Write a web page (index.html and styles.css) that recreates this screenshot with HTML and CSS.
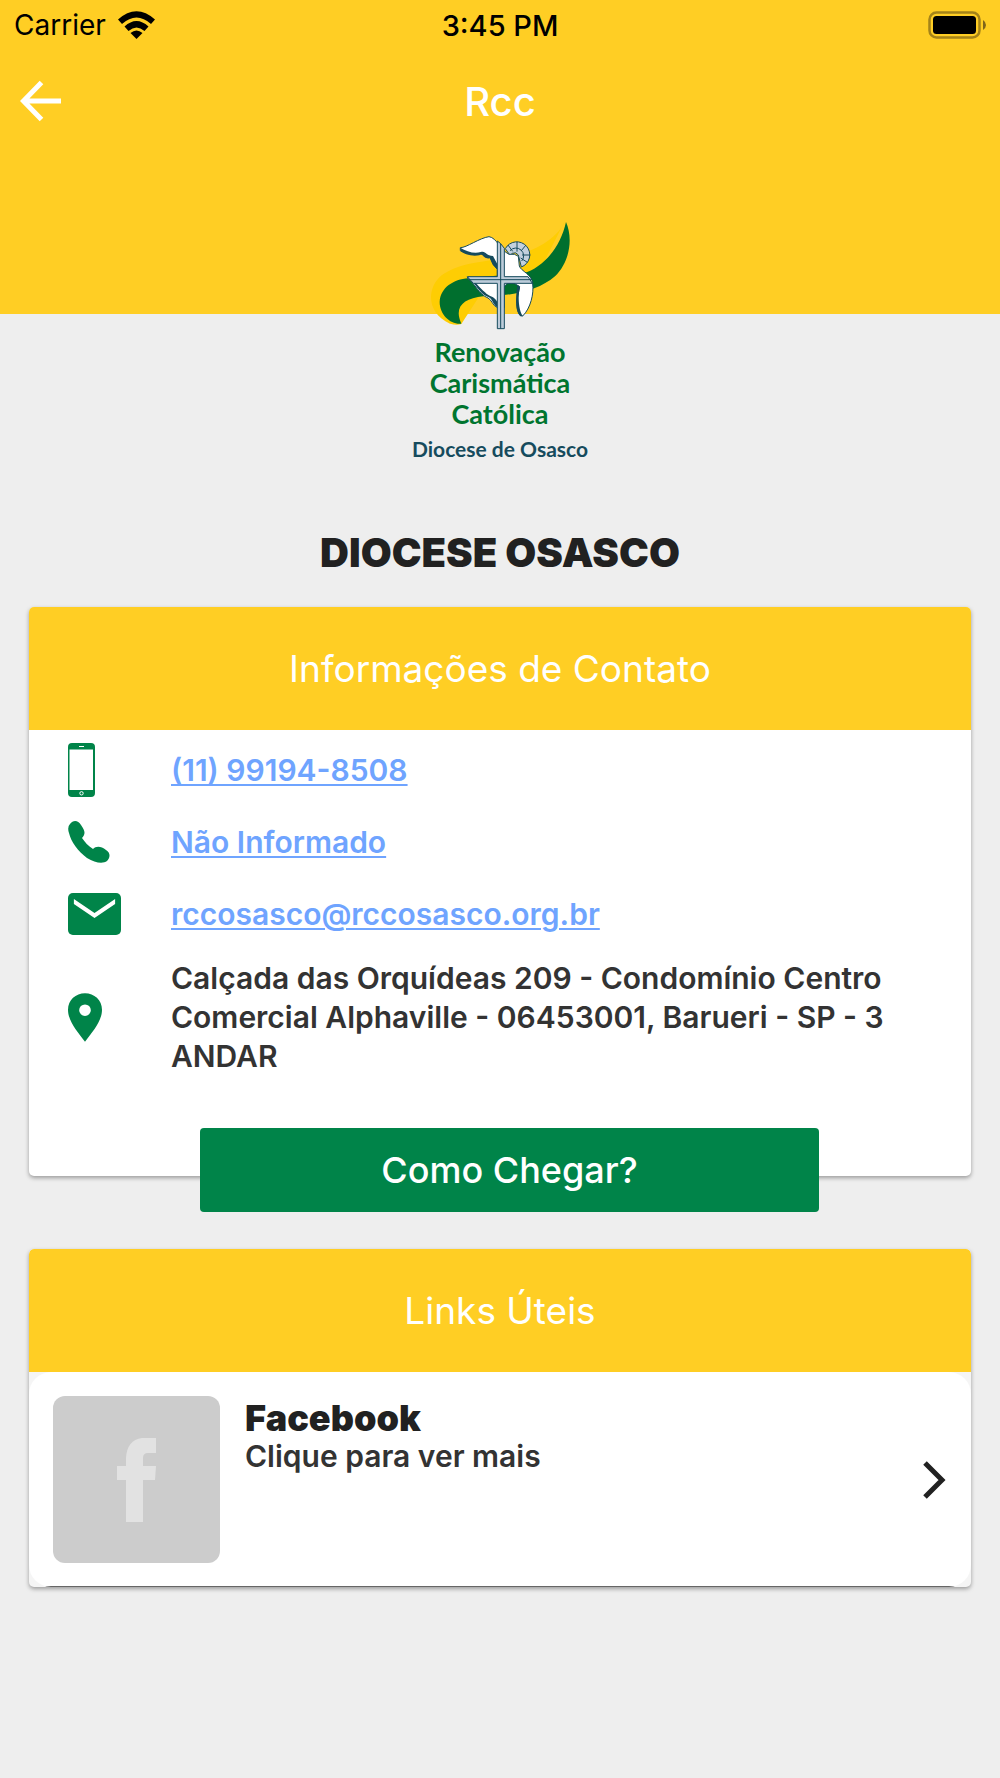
FILE: index.html
```html
<!DOCTYPE html>
<html lang="pt-BR">
<head>
<meta charset="utf-8">
<meta name="viewport" content="width=device-width, initial-scale=1">
<title>Rcc</title>
<link rel="stylesheet" href="styles.css">
</head>
<body>
<header class="top">
  <div class="status">
    <div class="carrier">
      <span>Carrier</span>
      <svg width="37" height="28" viewBox="0 0 37 28" aria-hidden="true">
        <path d="M0 8.500Q18.500-8 37 8.500L33 13Q18.500 0 4 13Z"/>
        <path d="M6.500 15.500Q18.500 4.500 30.500 15.500L26.500 20Q18.500 13 10.500 20Z"/>
        <path d="M12.500 22Q18.500 17 24.500 22L18.500 28Z"/>
      </svg>
    </div>
    <span class="time">3:45 PM</span>
    <svg class="battery" width="58" height="28" viewBox="0 0 58 28" aria-hidden="true">
      <rect x="1.500" y="1.500" width="50" height="25" rx="7" fill="none" stroke="#a48319" stroke-width="2.500"/>
      <rect x="5" y="5" width="43" height="18" rx="3.500"/>
      <path d="M55 9Q58 11 58 14T55 19Z" fill="#80651a"/>
    </svg>
  </div>
  <nav class="nav">
    <button class="back" type="button" aria-label="Voltar">
      <svg width="42" height="42" viewBox="0 0 42 42" fill="none" stroke="#fff" stroke-width="5" aria-hidden="true"><path d="M21.500 2.500 3.500 21l18 18.500M4 21h37"/></svg>
    </button>
    <h1 class="nav-title">Rcc</h1>
  </nav>
</header>
<main class="content">
  <div class="brand">
    <svg class="brand-art" width="200" height="130" viewBox="0 0 600 390" aria-hidden="true">
      <path d="M496 30C475 85 410 120 330 143C230 157 175 160 125 196C78 235 80 310 150 341Q170 347 184 342L250 240 420 180Z" fill="#fecd03"/>
      <path d="M498 36C519 83 511 154 465 199C414 242 345 257 250 259C190 265 161 291 184 341C152 345 118 313 119 275C122 233 160 208 205 205L370 190C430 173 482 111 498 36Z" fill="#006f2e"/>
      <g stroke="#164b5d" stroke-width="3" fill="#c3d0dd">
        <path d="M316 116A39 39 0 1 1 364 171L355 135A14 14 0 0 0 337 130L330 136Z"/>
        <path d="M330 122A23 23 0 1 1 365 153M351 95V125M324 105 338 124M378 105 363 123M366 135H391M362 144 382 157" fill="none"/>
      </g>
      <path d="M181 113C200 113 238 84 267 80C290 83 301 120 327 133Q346 130 355 139L358 168C363 184 397 193 398 222C402 250 392 295 368 318C352 318 347 286 353 260L359 230Q329 207 313 229V293H292C277 286 276 270 264 264C236 253 227 222 201 203L292 201V178C281 167 274 153 270 142C244 146 253 126 235 133C215 135 197 130 181 122Z" fill="#fff" stroke="#164b5d" stroke-width="3"/>
      <path d="M181 113 182 124C205 140 228 137 238 136C252 129 250 149 270 145L278 164 293 179V164L279 138C255 137 259 121 242 126C222 132 199 124 181 113ZM201 203C230 219 237 251 263 260C278 265 276 280 292 292V276C283 258 266 260 255 247C238 233 226 211 201 203ZM353 224C346 258 345 304 361 319H369C357 304 352 262 360 232Z" fill="#164b5d"/>
      <path d="M292 93 302 101 313 115V200H384L397 220H313V356H292V220H220L202 200H292Z" fill="#bdccda" stroke="#164b5d" stroke-width="3"/>
      <path d="M302 101V356M207 209H393" fill="none" stroke="#164b5d" stroke-width="3"/>
    </svg>
    <p class="brand-name">Renovação<br>Carismática<br>Católica</p>
    <p class="brand-place">Diocese de Osasco</p>
  </div>
  <h2 class="title">DIOCESE OSASCO</h2>

  <section class="card contact">
    <h3 class="card-head">Informações de Contato</h3>
    <ul class="rows">
      <li class="row">
        <svg width="27" height="54" viewBox="0 0 27 54" aria-hidden="true"><path fill="#008449" fill-rule="evenodd" d="M4 0H23Q27 0 27 4V50Q27 54 23 54H4Q0 54 0 50V4Q0 0 4 0ZM1.500 6.500V47H25V6.500ZM11 3V4H16V3Z"/><circle cx="13.500" cy="50.300" r="1.700" fill="none" stroke="#fff"/></svg>
        <a href="tel:+5511991948508">(11) 99194-8508</a>
      </li>
      <li class="row">
        <svg width="42" height="42" viewBox="0 0 42 42" aria-hidden="true"><path fill="#008449" d="M2 3C5-1 10-1 13 4C18 11 17 13 14 17C17 21 20 25 25 28C28 25 33 25 38 29C43 32 42 37 39 40C35 43 27 42 19 37C10 30 3 21 1 12Q-1 6 2 3Z"/></svg>
        <a href="#telefone">Não Informado</a>
      </li>
      <li class="row">
        <svg width="53" height="42" viewBox="0 0 54 42" preserveAspectRatio="none" aria-hidden="true"><rect width="54" height="42" rx="5" fill="#008449"/><path d="M6 6 27 20 48 6V11L27 25 6 11Z" fill="#fff"/></svg>
        <a href="mailto:rccosasco@rccosasco.org.br">rccosasco@rccosasco.org.br</a>
      </li>
      <li class="row row-address">
        <svg width="34" height="49" viewBox="0 0 35 50" aria-hidden="true"><path fill="#008449" fill-rule="evenodd" d="M17.500 0C27 0 35 7 35 17C35 28 26 39 17.500 50C9 39 0 28 0 17C0 7 8 0 17.500 0ZM17.500 11.500a6 6 0 1 0 0 12a6 6 0 1 0 0-12Z"/></svg>
        <address>Calçada das Orquídeas 209 - Condomínio Centro Comercial Alphaville - 06453001, Barueri - SP - 3 ANDAR</address>
      </li>
    </ul>
    <div class="actions">
      <button class="directions" type="button">Como Chegar?</button>
    </div>
  </section>

  <section class="card links">
    <h3 class="card-head">Links Úteis</h3>
    <a class="link" href="#facebook">
      <span class="thumb">
        <svg width="40" height="84" viewBox="0 0 40 84" aria-hidden="true"><path fill="#e2e2e2" d="M39 0V15H31Q26 15 26 20V28H39L38 42H26V84H9V42H0V28H9V20Q10 2 25 0Z"/></svg>
      </span>
      <span class="link-text">
        <strong>Facebook</strong>
        <span>Clique para ver mais</span>
      </span>
      <svg class="chevron" width="24" height="38" viewBox="0 0 24 38" fill="none" stroke="#212121" stroke-width="5" aria-hidden="true"><path d="M2 2 19 19 2 36"/></svg>
    </a>
  </section>
</main>
</body>
</html>
```

FILE: styles.css
```css
* {
  box-sizing: border-box;
}

body {
  margin: 0;
  min-height: 100vh;
  background: #eeeeee;
  color: #212121;
  font-family: Inter, "Liberation Sans", sans-serif;
}

h1, h2, h3, p, ul {
  margin: 0;
  padding: 0;
}

button {
  border: 0;
  font-family: inherit;
  cursor: pointer;
}

.top {
  height: 314px;
  background: #ffce24;
}

.status,
.nav {
  display: grid;
  grid-template-columns: 1fr auto 1fr;
  align-items: center;
}

.status {
  height: 50px;
  padding: 0 14px;
  color: #000;
  font-size: 28px;
}

.carrier {
  display: flex;
  align-items: center;
  gap: 12px;
}

.time {
  font-size: 29px;
  font-weight: 500;
}

.battery {
  justify-self: end;
}

.nav {
  height: 102px;
  padding: 0 20px;
}

.back {
  display: flex;
  justify-self: start;
  padding: 0;
  background: none;
}

.nav-title {
  color: #fff;
  font-size: 40px;
  font-weight: 500;
}

.content {
  padding: 0 29px 40px;
}

.brand {
  display: flex;
  flex-direction: column;
  align-items: center;
  margin-top: -104px;
  font-family: Lato, "Liberation Sans", sans-serif;
  text-align: center;
}

.brand-name {
  margin-top: -4px;
  color: #00752f;
  font-size: 27px;
  font-weight: 700;
  line-height: 31px;
}

.brand-place {
  margin-top: 6px;
  color: #164b5d;
  font-size: 21px;
  font-weight: 700;
  line-height: 28px;
}

.title {
  margin: 66px 0 30px;
  font-size: 40px;
  font-weight: 900;
  line-height: 48px;
  text-align: center;
}

.card {
  border-radius: 5px;
  background: #fff;
  box-shadow: 0 2px 4px rgba(0, 0, 0, 0.35);
}

.contact {
  display: flow-root;
}

.card-head {
  border-radius: 5px 5px 0 0;
  background: #ffce24;
  color: #fff;
  font-size: 37px;
  font-weight: 400;
  line-height: 123px;
  text-align: center;
}

.rows {
  padding: 4px 39px 0;
  list-style: none;
}

.row {
  display: grid;
  grid-template-columns: 103px 1fr;
  align-items: center;
  min-height: 72px;
  color: #333;
  font-size: 30px;
  font-weight: 600;
  line-height: 39px;
}

.row a {
  justify-self: start;
  color: #6fa4ff;
  text-decoration-thickness: 2px;
  text-underline-offset: 3px;
}

.row-address {
  min-height: 134px;
}

.row address {
  font-style: normal;
}

.actions {
  margin: 44px 0 -36px;
  padding: 0 152px 0 171px;
}

.directions {
  display: block;
  width: 100%;
  height: 84px;
  border-radius: 4px;
  background: #008449;
  color: #fff;
  font-size: 36px;
  font-weight: 500;
}

.links {
  margin-top: 73px;
  overflow: hidden;
  background: #f5f5f5;
}

.link {
  display: flex;
  gap: 25px;
  padding: 24px;
  border-radius: 22px;
  background: linear-gradient(#666, #666) bottom / 100% 1px no-repeat #fff;
  color: inherit;
  text-decoration: none;
}

.thumb {
  display: flex;
  align-items: center;
  justify-content: center;
  flex: none;
  width: 167px;
  height: 167px;
  border-radius: 12px;
  background: #ccc;
}

.link-text {
  display: flex;
  flex: 1;
  flex-direction: column;
  color: #333;
  font-size: 30px;
  font-weight: 600;
  line-height: 32px;
}

.link-text strong {
  color: #212121;
  font-size: 36px;
  font-weight: 900;
  line-height: 44px;
}

.chevron {
  align-self: center;
}
```
